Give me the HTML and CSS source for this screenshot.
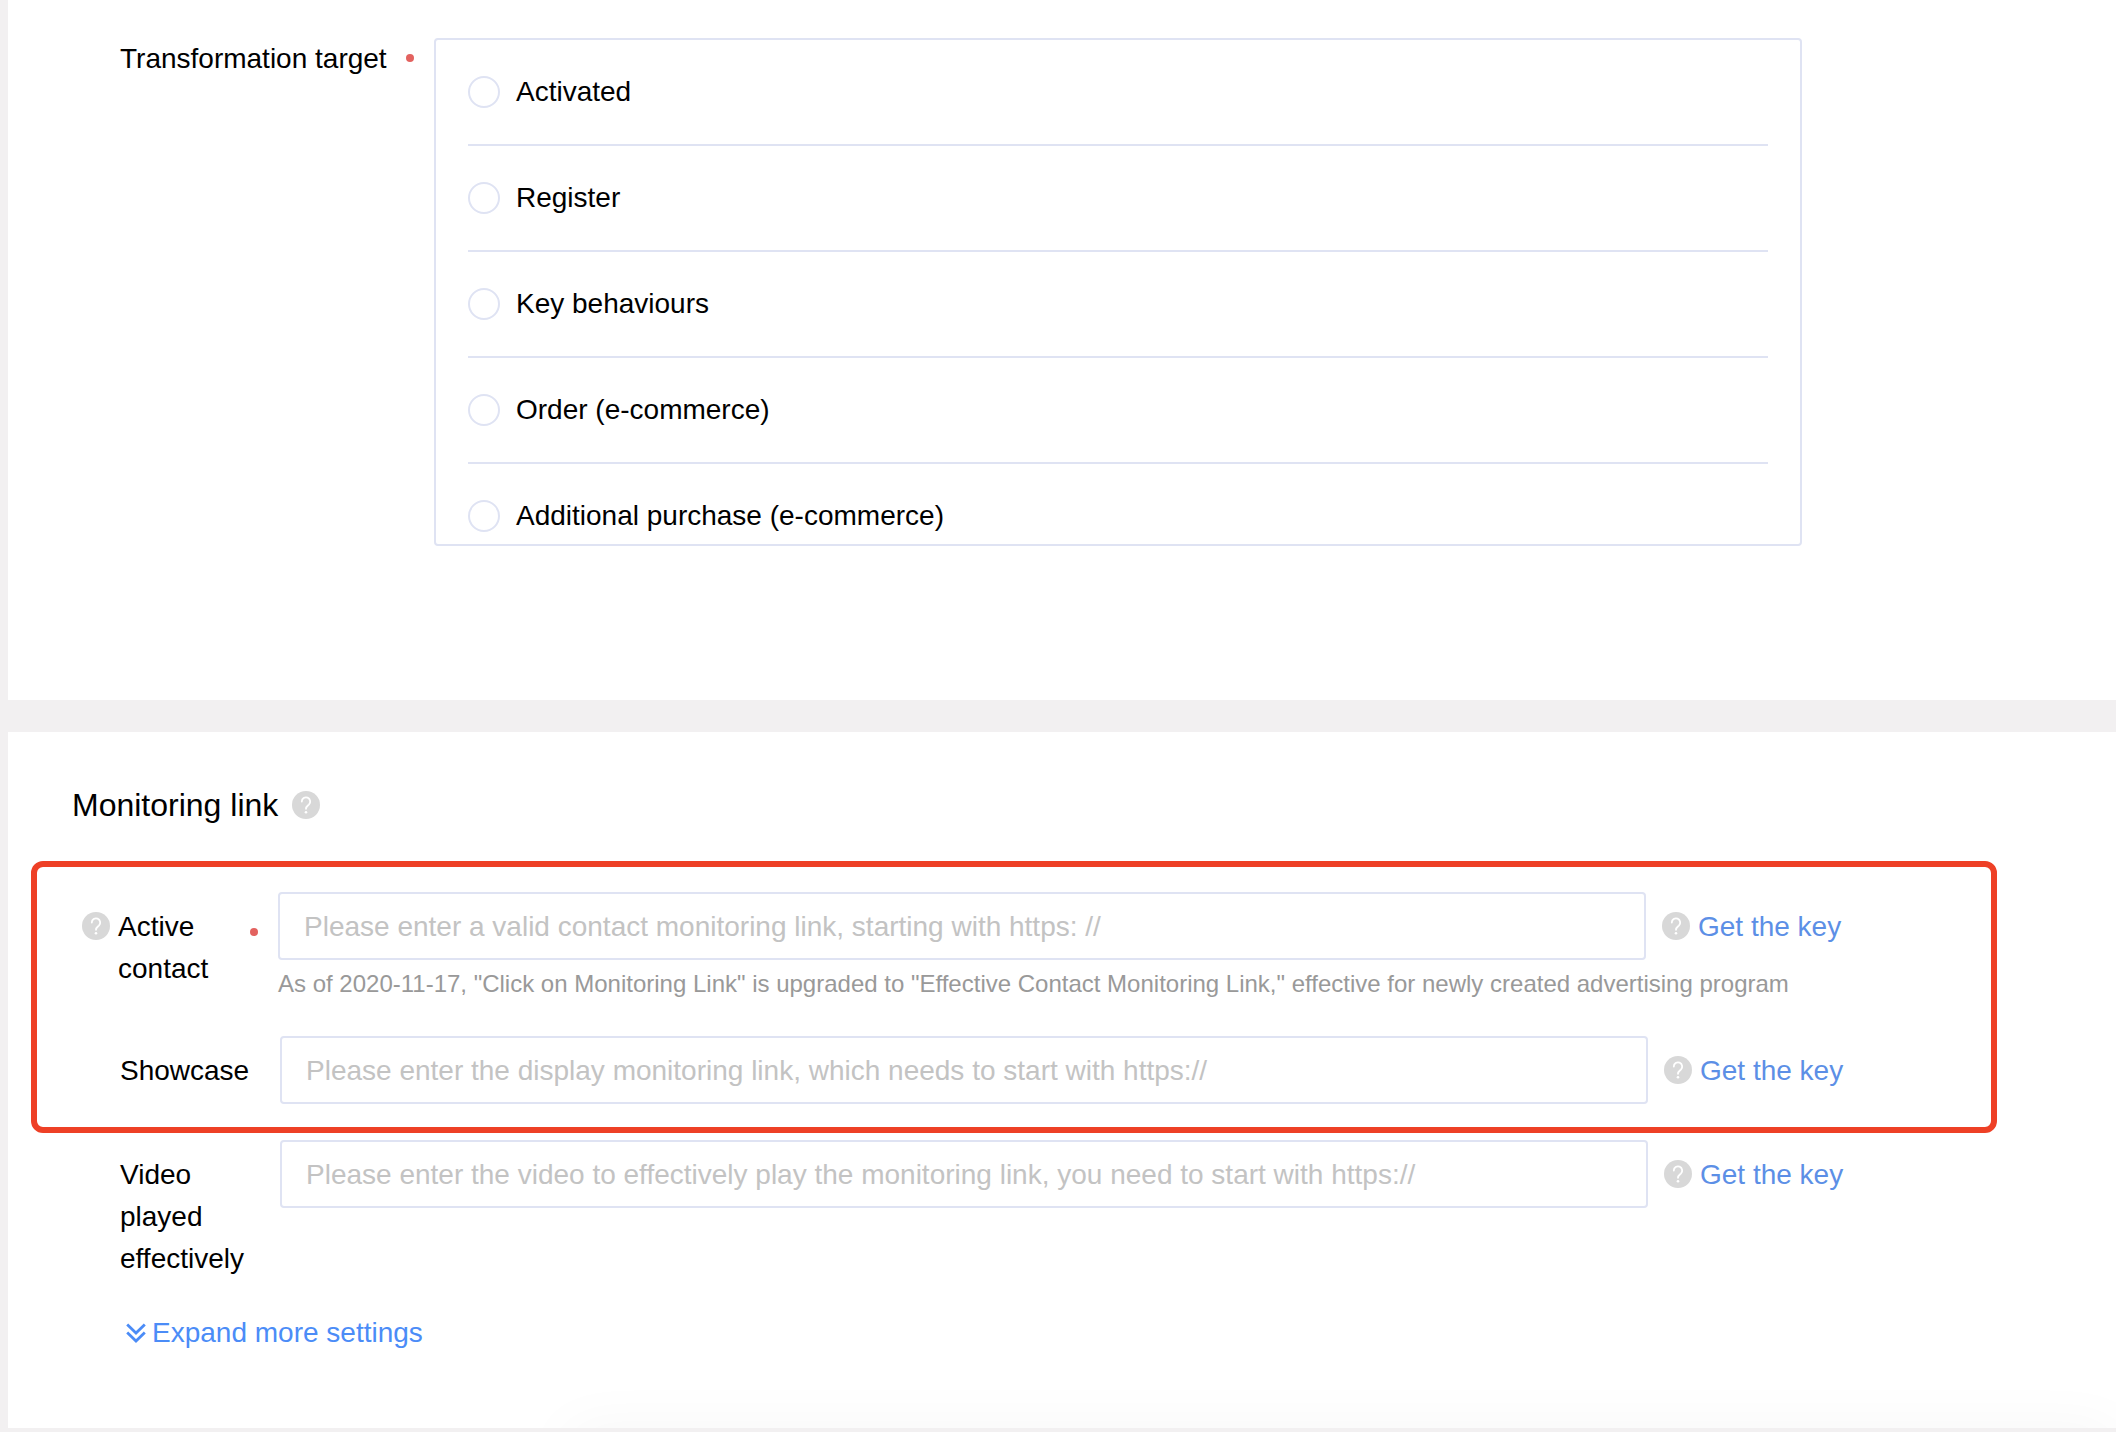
FILE: index.html
```html
<!DOCTYPE html>
<html lang="en">
<head>
<meta charset="utf-8">
<title>Monitoring link</title>
<link rel="stylesheet" href="styles.css">
</head>
<body>
<svg class="sprite" aria-hidden="true">
  <symbol id="help" viewBox="0 0 28 28">
    <circle cx="14" cy="14" r="14" fill="#d8d8d8"/>
    <path d="M9.800 10.600a4.200 4.200 0 1 1 7.100 3c-1.700 1.500-2.900 2.100-2.900 4.200" fill="none" stroke="#fff" stroke-width="1.800" stroke-linecap="round"/>
    <circle cx="14" cy="21.200" r="1.300" fill="#fff"/>
  </symbol>
  <symbol id="expand" viewBox="0 0 20 20">
    <path d="M1.200 1.500 10 10l8.800-8.500M1.200 9.500 10 18l8.800-8.500" fill="none" stroke="currentColor" stroke-width="2.800"/>
  </symbol>
</svg>
<main class="page">
  <section class="panel panel-target">
    <div class="target-label" id="target-label">Transformation target<span class="dot"></span></div>
    <div class="options" role="radiogroup" aria-labelledby="target-label">
      <label class="option"><input class="radio" type="radio" name="target">Activated</label>
      <label class="option"><input class="radio" type="radio" name="target">Register</label>
      <label class="option"><input class="radio" type="radio" name="target">Key behaviours</label>
      <label class="option"><input class="radio" type="radio" name="target">Order (e-commerce)</label>
      <label class="option"><input class="radio" type="radio" name="target">Additional purchase (e-commerce)</label>
    </div>
  </section>

  <section class="panel panel-links">
    <h2 class="heading">Monitoring link <svg class="help"><use href="#help"/></svg></h2>
    <div class="highlight">
      <div class="row row-required">
        <div class="row-label">
          <svg class="help"><use href="#help"/></svg>
          <label class="name" for="active">Active contact</label>
          <span class="dot"></span>
        </div>
        <input class="field" id="active" type="text" placeholder="Please enter a valid contact monitoring link, starting with https: //">
        <div class="key"><svg class="help"><use href="#help"/></svg><a class="link" href="#">Get the key</a></div>
        <p class="hint">As of 2020-11-17, "Click on Monitoring Link" is upgraded to "Effective Contact Monitoring Link," effective for newly created advertising program</p>
      </div>
      <div class="row row-plain">
        <div class="row-label"><label class="name" for="showcase">Showcase</label></div>
        <input class="field" id="showcase" type="text" placeholder="Please enter the display monitoring link, which needs to start with https://">
        <div class="key"><svg class="help"><use href="#help"/></svg><a class="link" href="#">Get the key</a></div>
      </div>
    </div>
    <div class="row row-video">
      <div class="row-label"><label class="name" for="video">Video played effectively</label></div>
      <input class="field" id="video" type="text" placeholder="Please enter the video to effectively play the monitoring link, you need to start with https://">
      <div class="key"><svg class="help"><use href="#help"/></svg><a class="link" href="#">Get the key</a></div>
    </div>
    <button class="expand" type="button"><svg class="chevrons"><use href="#expand"/></svg>Expand more settings</button>
    <div class="shade"></div>
  </section>
</main>
</body>
</html>
```
FILE: styles.css
```css
* {
  box-sizing: border-box;
}

body {
  margin: 0;
  background: #f2f0f1;
  color: #000;
  font: 28px/42px "Liberation Sans", Arial, sans-serif;
}

.sprite {
  display: none;
}

.page {
  display: flex;
  flex-direction: column;
  gap: 32px;
  padding: 0 0 4px 8px;
}

.panel {
  background: #fff;
}

.panel-target {
  display: flex;
  padding: 38px 314px 154px 112px;
}

.target-label {
  display: flex;
  flex: none;
  justify-content: space-between;
  width: 294px;
  margin-right: 20px;
}

.dot {
  flex: none;
  width: 8px;
  height: 8px;
  border-radius: 50%;
  background: #e3625f;
}

.target-label .dot {
  margin-top: 16px;
}

.options {
  flex: 1;
  height: 508px;
  padding: 0 32px;
  overflow-y: auto;
  scrollbar-width: none;
  border: 2px solid #dfe3f3;
  border-radius: 4px;
}

.option {
  display: flex;
  align-items: center;
  gap: 16px;
  height: 106px;
  border-bottom: 2px solid #dfe3f3;
}

.radio {
  appearance: none;
  flex: none;
  width: 32px;
  height: 32px;
  margin: 0;
  border: 2px solid #dfe3f3;
  border-radius: 50%;
  background: #fff;
}

.radio:checked {
  border: 10px solid #4b8cf7;
}

.panel-links {
  position: relative;
  padding: 49px 0 74px;
  overflow: hidden;
}

.heading {
  display: flex;
  align-items: center;
  gap: 14px;
  margin: 0 0 32px 64px;
  font-size: 32px;
  font-weight: 400;
  line-height: 48px;
}

.help {
  flex: none;
  width: 28px;
  height: 28px;
}

.highlight {
  display: flex;
  flex-direction: column;
  gap: 34px;
  margin: 0 119px 7px 23px;
  padding: 25px 0 23px;
  border: 6px solid #ee4026;
  border-radius: 12px;
}

.row {
  display: grid;
  grid-template-columns: 144px minmax(0, 1fr) 327px;
  column-gap: 16px;
}

.row-required {
  grid-template-columns: 180px minmax(0, 1fr) 327px;
  padding: 0 2px 0 45px;
}

.row-plain {
  padding-left: 83px;
}

.row-video {
  padding: 0 125px 0 112px;
}

.row-label {
  display: flex;
  gap: 8px;
  padding-top: 14px;
}

.row-required .row-label {
  grid-row: span 2;
  height: 98px;
}

.row-label .help {
  margin-top: 6px;
}

.row-label .dot {
  margin-top: 22px;
}

.name {
  width: 124px;
}

.field {
  width: 100%;
  height: 68px;
  padding: 2px 24px 0;
  border: 2px solid #dfe3f3;
  border-radius: 4px;
  background: #fff;
  color: #000;
  font: inherit;
}

.field::placeholder {
  color: #c3c3c3;
  opacity: 1;
}

.key {
  display: flex;
  align-items: center;
  gap: 8px;
  height: 68px;
}

.link {
  padding-top: 2px;
  color: #5c8fe6;
  text-decoration: none;
}

.hint {
  grid-column: 2 / -1;
  margin: 6px 0 0;
  color: #999;
  font-size: 24px;
  line-height: 36px;
}

.expand {
  display: flex;
  align-items: center;
  gap: 6px;
  margin: 32px 0 0 118px;
  padding: 0;
  border: 0;
  background: none;
  color: #4b8cf7;
  font: inherit;
}

.chevrons {
  width: 20px;
  height: 20px;
}

/* Soft shadow cast upward along the bottom edge of the panel */
.shade {
  position: absolute;
  top: 100%;
  right: 0;
  left: 560px;
  height: 60px;
  box-shadow: 0 0 60px rgba(0, 0, 0, 0.04);
}
```
